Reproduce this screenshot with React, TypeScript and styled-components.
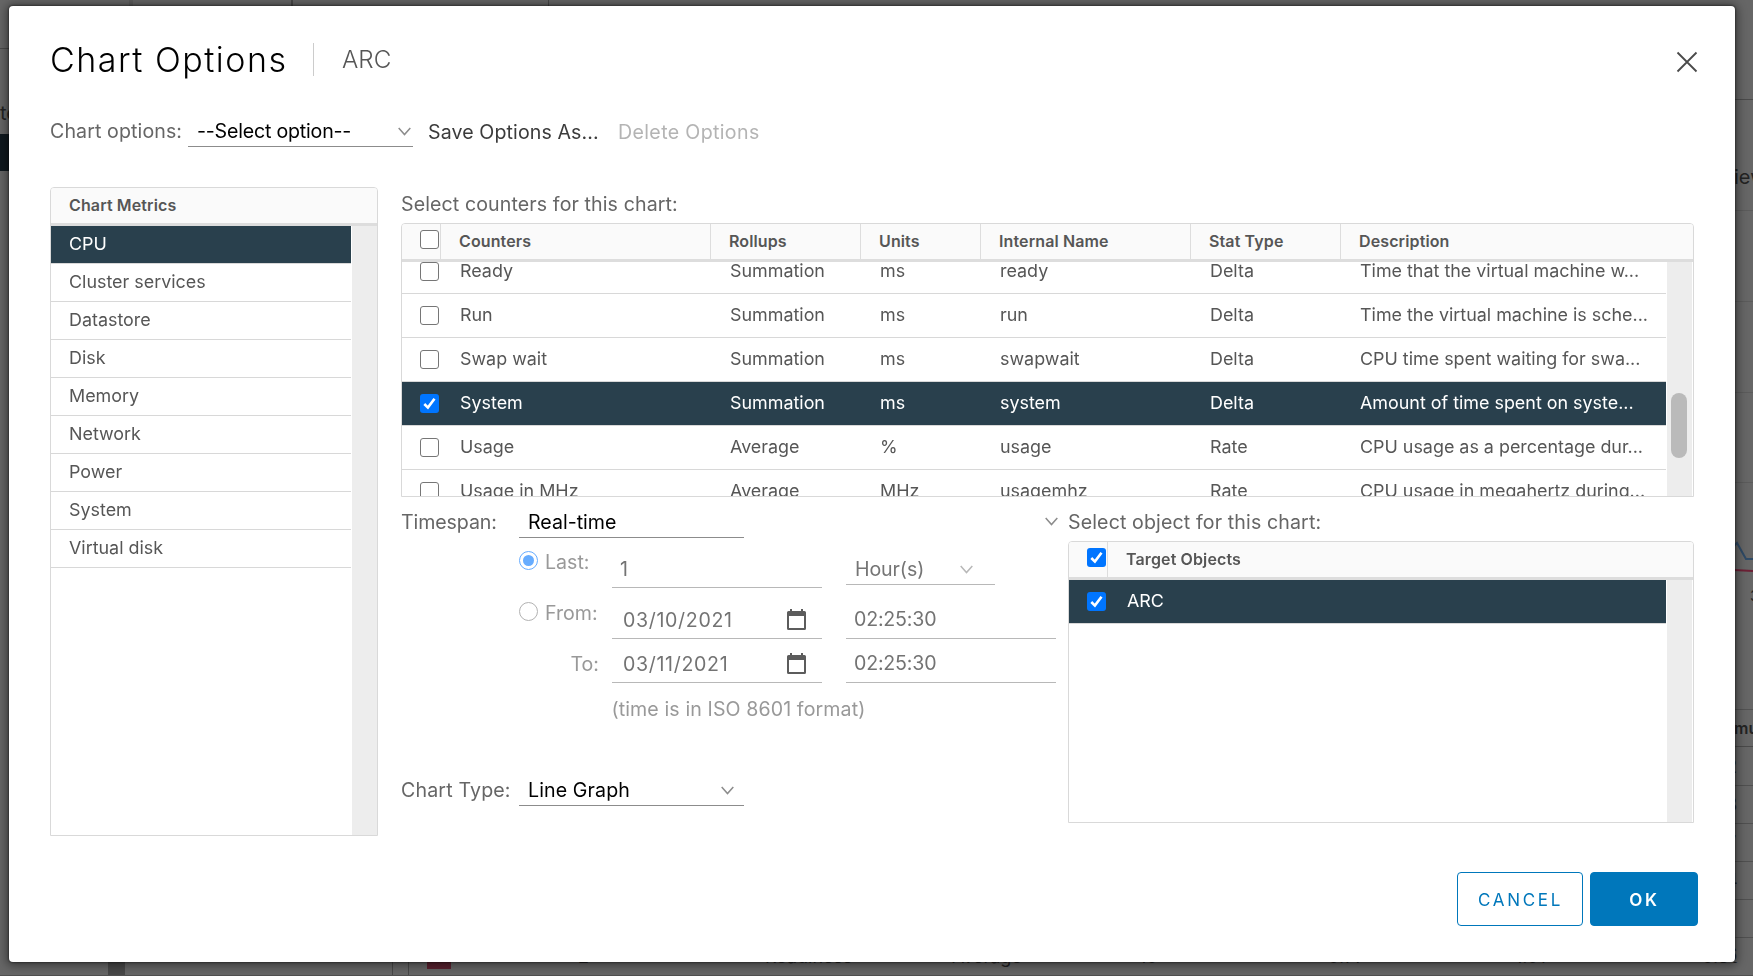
import React from 'react';
import styled, { createGlobalStyle, css } from 'styled-components';

const GlobalStyle = createGlobalStyle`
  *, *::before, *::after { box-sizing: border-box; }
  html, body, #root { height: 100%; }
  body {
    margin: 0;
    overflow: hidden;
    background: #666;
    color: #565656;
    font-family: Inter, "Liberation Sans", sans-serif;
    font-weight: 370;
    font-size: 19.6px;
  }
`;

/* ---------- page behind the dialog ---------- */

const Backdrop = styled.div`
  display: flex;
  flex-direction: column;
  width: 1753px;
  height: 976px;
  overflow: hidden;
  background: #666;
`;

const Strip = styled.div<{ $h: number; $bg?: string }>`
  display: flex;
  flex: none;
  height: ${p => p.$h}px;
  overflow: hidden;
  background: ${p => p.$bg ?? 'transparent'};
`;

const Block = styled.div<{ $w: number; $h?: number; $bg?: string }>`
  flex: none;
  width: ${p => p.$w}px;
  height: ${p => (p.$h ? `${p.$h}px` : '100%')};
  background: ${p => p.$bg ?? 'transparent'};
`;

const Middle = styled.div`
  display: flex;
  flex: none;
  justify-content: space-between;
  height: 956px;
`;

const EdgeColumn = styled.div<{ $w: number }>`
  display: flex;
  flex-direction: column;
  width: ${p => p.$w}px;
  overflow: hidden;
`;

const EdgeCell = styled.div<{ $h: number; $line?: string; $bg?: string; $size?: number; $bold?: boolean; $indent?: number; $drop?: number }>`
  flex: none;
  display: flex;
  align-items: center;
  height: ${p => p.$h}px;
  padding-top: ${p => p.$drop ?? 0}px;
  padding-left: ${p => p.$indent ?? 0}px;
  border-bottom: ${p => (p.$line ? `1px solid ${p.$line}` : 'none')};
  background: ${p => p.$bg ?? 'transparent'};
  color: #232323;
  font-size: ${p => p.$size ?? 18}px;
  font-weight: ${p => (p.$bold ? 600 : 370)};
  white-space: nowrap;
`;

const BottomText = styled.div<{ $w: number }>`
  flex: none;
  width: ${p => p.$w}px;
  margin-top: -16px;
  font-size: 18px;
  line-height: 22px;
  color: #222;
`;

/* ---------- dialog ---------- */

const Dialog = styled.section`
  position: fixed;
  top: 6px;
  left: 9px;
  width: 1726px;
  height: 956px;
  padding: 30px 37px 0 41px;
  border-radius: 4px;
  background: #fff;
  box-shadow: 0 1px 10px 3px rgba(0, 0, 0, 0.4), 0 0 2px 1px rgba(0, 0, 0, 0.35);
`;

const Header = styled.header`
  display: flex;
  align-items: center;
  height: 46px;
`;

const Title = styled.h1`
  width: 263px;
  margin: 0;
  padding-top: 2px;
  font-size: 34px;
  font-weight: 270;
  letter-spacing: 1.5px;
  line-height: 46px;
  color: #000;
  white-space: nowrap;
`;

const Subtitle = styled.span`
  display: flex;
  align-items: center;
  height: 33px;
  padding: 0 0 0 28px;
  border-left: 1px solid #ccc;
  font-size: 24.2px;
  font-weight: 310;
`;

const CloseButton = styled.button`
  display: flex;
  margin: 6px 0 0 auto;
  padding: 0;
  border: 0;
  background: none;
`;

const Toolbar = styled.div`
  display: flex;
  height: 31px;
  margin-top: 34px;
  line-height: 30px;
  white-space: nowrap;
`;

const ToolbarLabel = styled.label`
  width: 138px;
  letter-spacing: 0.1px;
  color: #666;
`;

const ToolbarLink = styled.button<{ $disabled?: boolean; $w: number }>`
  width: ${p => p.$w}px;
  padding: 2px 0 0;
  border: 0;
  background: none;
  font: inherit;
  line-height: 29px;
  text-align: left;
  letter-spacing: ${p => (p.$disabled ? 0.35 : 0.1)}px;
  color: ${p => (p.$disabled ? '#b4b4b4' : '#3c3c3c')};
`;

const SelectBox = styled.div<{ $w: number; $h: number; $muted?: boolean; $padTop?: number; $padRight?: number; $track?: number }>`
  display: flex;
  flex: none;
  align-items: center;
  justify-content: space-between;
  width: ${p => p.$w}px;
  height: ${p => p.$h}px;
  padding: ${p => p.$padTop ?? 0}px ${p => p.$padRight ?? 2}px 0 9px;
  border-bottom: 1px solid ${p => (p.$muted ? '#b8b8b8' : '#8c8c8c')};
  color: ${p => (p.$muted ? '#757575' : '#000')};
  letter-spacing: ${p => p.$track ?? 0}px;
  white-space: nowrap;
`;

const Body = styled.div`
  display: flex;
  gap: 23px;
  height: 649px;
  margin-top: 40px;
`;

const Panel = styled.div<{ $w: number; $h: number }>`
  display: flex;
  flex-direction: column;
  flex: none;
  width: ${p => p.$w}px;
  height: ${p => p.$h}px;
  border: 1px solid #d9d9d9;
  border-radius: 4px 4px 0 0;
  overflow: hidden;
`;

const PanelHead = styled.div`
  display: flex;
  flex: none;
  height: 38px;
  border-bottom: 3px solid #ddd;
  background: #fafafa;
  font-size: 16px;
  font-weight: 600;
  letter-spacing: 0.12px;
`;

const PanelBody = styled.div`
  display: flex;
  flex: 1;
  min-height: 0;
  justify-content: space-between;
`;

const Rows = styled.div`
  display: flex;
  flex-direction: column;
  flex: 1;
  margin-right: 1px;
  overflow: hidden;
`;

const ScrolledRows = styled.div`
  flex: none;
  height: 234px;
  > div:first-child { margin-top: -12px; }
`;

const ScrollTrack = styled.div<{ $padTop?: number; $flush?: boolean }>`
  flex: none;
  width: ${p => (p.$flush ? 25 : 26)}px;
  padding: ${p => p.$padTop ?? 0}px 5px 0 4px;
  border-right: ${p => (p.$flush ? '0' : '1px solid #fff')};
  background: #ededed;
`;

const ScrollThumb = styled.div`
  height: 65px;
  border-radius: 8px;
  background: #bababa;
`;

const selected = css`
  background: #29404d;
  color: #fff;
  font-weight: 430;
`;

const MetricRow = styled.div<{ $selected?: boolean }>`
  flex: none;
  height: 38px;
  padding: 0 0 0 18px;
  border-bottom: 1px solid #d8d8d8;
  font-size: 17.9px;
  line-height: 35px;
  ${p => p.$selected && selected}
`;

const MetricHead = styled.div`
  padding-left: 18px;
  line-height: 35px;
`;

const columns = '39px 270px 150px 120px 210px 150px minmax(0, 1fr)';

const CounterHead = styled(PanelHead)`
  display: grid;
  grid-template-columns: ${columns};
`;

const HeadCell = styled.div<{ $last?: boolean }>`
  padding-left: 18px;
  border-right: ${p => (p.$last ? '0' : '1px solid #ddd')};
  line-height: 35px;
  white-space: nowrap;
`;

const CheckHeadCell = styled.div`
  padding: 6px 0 0 18px;
  border-right: 1px solid #ddd;
`;

const CounterRow = styled.div<{ $selected?: boolean }>`
  display: grid;
  grid-template-columns: ${columns};
  height: 44px;
  border-bottom: 1px solid #d8d8d8;
  font-size: 17.9px;
  ${p => p.$selected && selected}
`;

const Cell = styled.div`
  padding-left: 19px;
  line-height: 41px;
  white-space: nowrap;
`;

const CheckCell = styled.div`
  padding: 12px 0 0 18px;
`;

const TargetHead = styled(PanelHead)`
  display: grid;
  grid-template-columns: 39px 1fr;
`;

const TargetRow = styled.div`
  display: grid;
  grid-template-columns: 39px 1fr;
  height: 44px;
  border-bottom: 1px solid #d8d8d8;
  font-size: 17.9px;
  ${selected}
`;

const Box = styled.span<{ $on?: boolean }>`
  display: flex;
  align-items: center;
  justify-content: center;
  width: 19px;
  height: 19px;
  border: ${p => (p.$on ? '0' : '1.5px solid #767676')};
  border-radius: 3px;
  background: ${p => (p.$on ? '#0075ff' : '#fff')};
`;

const Main = styled.div`
  width: 1293px;
`;

const CounterLabel = styled.div`
  height: 36px;
  line-height: 34px;
  letter-spacing: 0.1px;
  color: #666;
`;

const Lower = styled.div`
  display: flex;
`;

const Form = styled.div`
  width: 667px;
`;

const FormRow = styled.div<{ $h: number; $mt?: number }>`
  display: flex;
  height: ${p => p.$h}px;
  margin-top: ${p => p.$mt ?? 0}px;
`;

const FormLabel = styled.label<{ $top?: number; $track?: number }>`
  flex: none;
  width: 118px;
  padding-top: ${p => p.$top ?? 0}px;
  line-height: 30px;
  letter-spacing: ${p => p.$track ?? 0}px;
  white-space: nowrap;
  color: #666;
`;

const FarChevron = styled.span`
  display: flex;
  margin: 20px 10px 0 auto;
`;

const TimeRow = styled.div<{ $h: number }>`
  display: grid;
  grid-template-columns: 93px 210px 210px;
  grid-template-rows: 100%;
  height: ${p => p.$h}px;
  margin-left: 118px;
  color: #999;
`;

const RadioLabel = styled.label<{ $top: number }>`
  display: flex;
  gap: 7px;
  align-items: flex-start;
  padding-top: ${p => p.$top}px;
  line-height: 22px;
`;

const RadioDot = styled.span<{ $on?: boolean }>`
  display: flex;
  align-items: center;
  justify-content: center;
  width: 19px;
  height: 19px;
  border: 1.5px solid ${p => (p.$on ? '#66acff' : '#b2b2b2')};
  border-radius: 50%;
  &::after {
    content: '';
    width: 11px;
    height: 11px;
    border-radius: 50%;
    background: ${p => (p.$on ? '#66acff' : 'transparent')};
  }
`;

const ToLabel = styled.label`
  padding: 3px 13px 0 0;
  line-height: 44px;
  text-align: right;
`;

const Field = styled.div<{ $padTop: number; $left?: number; $track?: number }>`
  display: flex;
  align-items: flex-start;
  justify-content: space-between;
  padding: ${p => p.$padTop}px 16px 0 ${p => p.$left ?? 8}px;
  border-bottom: 1px solid #b8b8b8;
  line-height: 24px;
  letter-spacing: ${p => p.$track ?? 0}px;
  color: #737373;
`;

const CalendarSlot = styled.span`
  display: flex;
  padding-top: 1px;
`;

const TimeField = styled(Field)`
  width: 210px;
  margin-left: 24px;
`;

const UnitSlot = styled.div`
  padding-left: 24px;
`;

const Hint = styled.div`
  height: 52px;
  padding-left: 210.500px;
  line-height: 52px;
  letter-spacing: 0.1px;
  color: #999;
`;

const Targets = styled.div`
  width: 626px;
`;

const TargetLabel = styled.div`
  height: 44px;
  padding-top: 6px;
  line-height: 38px;
  letter-spacing: 0.12px;
  color: #666;
`;

const Footer = styled.footer`
  display: flex;
  justify-content: flex-end;
  gap: 7px;
  margin-top: 36px;
`;

const Button = styled.button<{ $primary?: boolean }>`
  width: ${p => (p.$primary ? 108 : 126)}px;
  height: 54px;
  padding: 2px 0 0 1px;
  border: 1px solid #0077bb;
  border-radius: 4px;
  background: ${p => (p.$primary ? '#0077bb' : '#fff')};
  color: ${p => (p.$primary ? '#fff' : '#0077bb')};
  font-family: inherit;
  font-size: 17px;
  font-weight: ${p => (p.$primary ? 600 : 440)};
  letter-spacing: 2.7px;
`;

const Chevron = ({ color = '#8c8c8c' }: { color?: string }) => (
  <svg width="13" height="9" viewBox="0 0 13 9" fill="none">
    <path d="M0.7 1 L6.5 7.6 L12.3 1" stroke={color} strokeWidth="1.5" />
  </svg>
);

const Calendar = () => (
  <CalendarSlot>
    <svg width="19" height="21" viewBox="0 0 19 21">
      <path d="M3 0h2v2h9V0h2v2h1.5A1.5 1.5 0 0 1 19 3.5V19.5A1.5 1.5 0 0 1 17.5 21H1.5A1.5 1.5 0 0 1 0 19.5V3.5A1.5 1.5 0 0 1 1.500 2H3ZM2 7V19H17V7Z" fill="#5c5c5c" fillRule="evenodd" />
    </svg>
  </CalendarSlot>
);

const Checkbox = ({ on }: { on?: boolean }) => (
  <Box $on={on}>
    {on && (
      <svg width="15" height="15" viewBox="0 0 15 15" fill="none">
        <path d="M2.3 8 L5.9 11.6 L12.5 2.8" stroke="#fff" strokeWidth="2.6" />
      </svg>
    )}
  </Box>
);

const metrics = ['CPU', 'Cluster services', 'Datastore', 'Disk', 'Memory', 'Network', 'Power', 'System', 'Virtual disk'];

const counters = [
  ['Ready', 'Summation', 'ms', 'ready', 'Delta', 'Time that the virtual machine w...'],
  ['Run', 'Summation', 'ms', 'run', 'Delta', 'Time the virtual machine is sche...'],
  ['Swap wait', 'Summation', 'ms', 'swapwait', 'Delta', 'CPU time spent waiting for swa...'],
  ['System', 'Summation', 'ms', 'system', 'Delta', 'Amount of time spent on syste...'],
  ['Usage', 'Average', '%', 'usage', 'Rate', 'CPU usage as a percentage dur...'],
  ['Usage in MHz', 'Average', 'MHz', 'usagemhz', 'Rate', 'CPU usage in megahertz during...'],
];

const heads = ['Counters', 'Rollups', 'Units', 'Internal Name', 'Stat Type', 'Description'];

const PageBehind = () => (
  <Backdrop>
    <Strip $h={6}>
      <Block $w={129} />
      <Block $w={4} $bg="#5c5c5c" />
      <Block $w={158} />
      <Block $w={2} $bg="#484848" />
      <Block $w={255} />
      <Block $w={1} $bg="#484848" />
    </Strip>
    <Middle>
      <EdgeColumn $w={9}>
        <EdgeCell $h={43} $line="#4a4a4a" />
        <EdgeCell $h={85} $size={20} $drop={43}>te</EdgeCell>
        <EdgeCell $h={37} $bg="#10191f" />
      </EdgeColumn>
      <EdgeColumn $w={30}>
        <EdgeCell $h={94} $line="#4a4a4a" />
        <EdgeCell $h={111} $line="#5b5b5b" $size={20} $indent={11} $drop={43}>iew</EdgeCell>
        <EdgeCell $h={91} $line="#5b5b5b" />
        <EdgeCell $h={91} $line="#5b5b5b" />
        <EdgeCell $h={90} $line="#5b5b5b" />
        <EdgeCell $h={95} $indent={11}>
          <svg width="19" height="95" viewBox="0 0 19 95" fill="none">
            <path d="M0 63 L3 60 L12 76 H19" stroke="#2f4a66" strokeWidth="2" />
            <path d="M0 87 L19 88" stroke="#6d2035" strokeWidth="2" />
          </svg>
        </EdgeCell>
        <EdgeCell $h={34} $size={15} $indent={27}>3</EdgeCell>
        <EdgeCell $h={62} />
        <EdgeCell $h={36} $line="#525252" />
        <EdgeCell $h={37} $line="#4a4a4a" $size={16} $indent={11} $bold>mum</EdgeCell>
        <EdgeCell $h={39} $line="#505050" $indent={3}>2</EdgeCell>
        <EdgeCell $h={38} $line="#505050" $indent={3}>8</EdgeCell>
        <EdgeCell $h={38} $line="#505050" $indent={3}>7</EdgeCell>
        <EdgeCell $h={38} $line="#505050" $indent={3}>4</EdgeCell>
        <EdgeCell $h={38} $line="#505050" />
        <EdgeCell $h={24} $indent={3} $drop={8}>6</EdgeCell>
      </EdgeColumn>
    </Middle>
    <Strip $h={13}>
      <Block $w={108} />
      <Block $w={17} $bg="#484848" />
      <Block $w={267} />
      <Block $w={1} $bg="#484848" />
      <Block $w={15} />
      <Block $w={1} $bg="#484848" />
      <Block $w={18} />
      <Block $w={24} $h={7} $bg="#5a2230" />
      <Block $w={127} />
      <BottomText $w={187}>2</BottomText>
      <BottomText $w={187}>Readiness</BottomText>
      <BottomText $w={187}>Average</BottomText>
      <BottomText $w={189}>10</BottomText>
      <BottomText $w={187}>0.14</BottomText>
      <BottomText $w={187}>1.01</BottomText>
      <BottomText $w={38}>0.86</BottomText>
    </Strip>
    <Strip $h={1} $bg="#505050" />
  </Backdrop>
);

export default function App() {
  return (
    <>
      <GlobalStyle />
      <PageBehind />
      <Dialog>
        <Header>
          <Title>Chart Options</Title>
          <Subtitle>ARC</Subtitle>
          <CloseButton aria-label="Close">
            <svg width="22" height="22" viewBox="0 0 22 22" fill="none">
              <path d="M1.5 1.5 L20.5 20.5 M20.5 1.5 L1.5 20.5" stroke="#4a4a4a" strokeWidth="1.8" />
            </svg>
          </CloseButton>
        </Header>

        <Toolbar>
          <ToolbarLabel>Chart options:</ToolbarLabel>
          <SelectBox $w={225} $h={31} $track={-0.2}>
            --Select option--
            <Chevron />
          </SelectBox>
          <Block $w={15} />
          <ToolbarLink $w={190}>Save Options As...</ToolbarLink>
          <ToolbarLink $w={160} $disabled>Delete Options</ToolbarLink>
        </Toolbar>

        <Body>
          <Panel $w={328} $h={649}>
            <PanelHead>
              <MetricHead>Chart Metrics</MetricHead>
            </PanelHead>
            <PanelBody>
              <Rows>
                {metrics.map((m, i) => (
                  <MetricRow key={m} $selected={i === 0}>{m}</MetricRow>
                ))}
              </Rows>
              <ScrollTrack $flush />
            </PanelBody>
          </Panel>

          <Main>
            <CounterLabel>Select counters for this chart:</CounterLabel>
            <Panel $w={1293} $h={274}>
              <CounterHead>
                <CheckHeadCell><Checkbox /></CheckHeadCell>
                {heads.map((h, i) => (
                  <HeadCell key={h} $last={i === heads.length - 1}>{h}</HeadCell>
                ))}
              </CounterHead>
              <PanelBody>
                <Rows>
                  <ScrolledRows>
                    {counters.map(row => (
                      <CounterRow key={row[0]} $selected={row[0] === 'System'}>
                        <CheckCell><Checkbox on={row[0] === 'System'} /></CheckCell>
                        {row.map((value, i) => <Cell key={i}>{value}</Cell>)}
                      </CounterRow>
                    ))}
                  </ScrolledRows>
                </Rows>
                <ScrollTrack $padTop={131}><ScrollThumb /></ScrollTrack>
              </PanelBody>
            </Panel>

            <Lower>
              <Form>
                <FormRow $h={41}>
                  <FormLabel $top={10} $track={-0.1}>Timespan:</FormLabel>
                  <SelectBox $w={225} $h={41} $padTop={9}>Real-time</SelectBox>
                  <FarChevron><Chevron /></FarChevron>
                </FormRow>
                <TimeRow $h={50}>
                  <RadioLabel $top={13}><RadioDot $on />Last:</RadioLabel>
                  <Field $padTop={19}>1</Field>
                  <UnitSlot>
                    <SelectBox $w={149} $h={47} $padTop={16} $padRight={22} $muted $track={-0.1}>
                      Hour(s)
                      <Chevron color="#b8b8b8" />
                    </SelectBox>
                  </UnitSlot>
                </TimeRow>
                <TimeRow $h={51}>
                  <RadioLabel $top={14}><RadioDot />From:</RadioLabel>
                  <Field $padTop={20} $left={11} $track={0.65}>03/10/2021<Calendar /></Field>
                  <TimeField $padTop={19} $track={-0.2}>02:25:30</TimeField>
                </TimeRow>
                <TimeRow $h={44}>
                  <ToLabel>To:</ToLabel>
                  <Field $padTop={13} $left={11} $track={0.65}>03/11/2021<Calendar /></Field>
                  <TimeField $padTop={12} $track={-0.2}>02:25:30</TimeField>
                </TimeRow>
                <Hint>(time is in ISO 8601 format)</Hint>
                <FormRow $h={31} $mt={40}>
                  <FormLabel $track={0.15}>Chart Type:</FormLabel>
                  <SelectBox $w={225} $h={31} $padRight={10} $track={0.1}>
                    Line Graph
                    <Chevron />
                  </SelectBox>
                </FormRow>
              </Form>

              <Targets>
                <TargetLabel>Select object for this chart:</TargetLabel>
                <Panel $w={626} $h={282}>
                  <TargetHead>
                    <CheckHeadCell><Checkbox on /></CheckHeadCell>
                    <HeadCell $last>Target Objects</HeadCell>
                  </TargetHead>
                  <PanelBody>
                    <Rows>
                      <TargetRow>
                        <CheckCell><Checkbox on /></CheckCell>
                        <Cell>ARC</Cell>
                      </TargetRow>
                    </Rows>
                    <ScrollTrack />
                  </PanelBody>
                </Panel>
              </Targets>
            </Lower>
          </Main>
        </Body>

        <Footer>
          <Button>CANCEL</Button>
          <Button $primary>OK</Button>
        </Footer>
      </Dialog>
    </>
  );
}
